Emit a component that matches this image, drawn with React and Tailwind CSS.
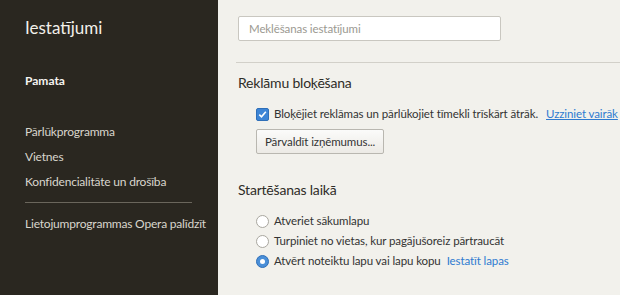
import React, { useState } from 'react'

const NAV = ['Pārlūkprogramma', 'Vietnes', 'Konfidencialitāte un drošība']

const STARTUP = [
  { key: 'home', label: 'Atveriet sākumlapu' },
  { key: 'continue', label: 'Turpiniet no vietas, kur pagājušoreiz pārtraucāt' },
  { key: 'pages', label: 'Atvērt noteiktu lapu vai lapu kopu', link: 'Iestatīt lapas' }
]

export default function App() {
  const [block, setBlock] = useState(true)
  const [startup, setStartup] = useState('pages')

  return (
    <div className="flex w-[620px] h-[295px] overflow-hidden text-[12px] text-[#333] whitespace-nowrap" style={{ fontFamily: 'Lato, "Noto Sans", sans-serif' }}>
      {/* ── Sidebar ── */}
      <div className="w-[218px] shrink-0 bg-[#2a2720] pl-[25px] pt-[17px]">
        <h1 className="text-[17px] text-[#f2f0ea] leading-[22px]">Iestatījumi</h1>
        <div className="mt-[34px] font-bold text-[#f5f4f0] leading-[16px]">Pamata</div>
        <div className="mt-[35px] space-y-[9px] text-[#d9d6cd] leading-[16px] tracking-[-0.2px]">
          {NAV.map(n => <div key={n}>{n}</div>)}
        </div>
        <div className="mt-[12px] w-[167px] border-t border-[#6a665c]" />
        <div className="mt-[13px] text-[#d9d6cd] leading-[16px] tracking-[-0.2px]">Lietojumprogrammas Opera palīdzīt</div>
      </div>

      {/* ── Main ── */}
      <div className="flex-1 bg-[#f2f1ec] pt-[16px] text-[11.5px] tracking-[-0.1px]">
        <div className="pl-[20px]">
          <input placeholder="Meklēšanas iestatījumi" className="w-[263px] h-[25px] bg-white border border-[#c9c7c0] rounded-[2px] px-[10px] text-[11.5px] placeholder:text-[#9b9991] outline-none" />
        </div>
        <div className="mt-[21px] ml-[18px] border-t border-[#d2d0c9]" />

        <div className="pl-[20px] pt-[10px]">
          <h2 className="text-[14px] text-[#2f2d28] leading-[20px] tracking-[-0.2px]">Reklāmu bloķēšana</h2>
          <div className="pl-[18px] mt-[13px]">
            <label className="flex items-center gap-[5px] leading-[16px]">
              <span onClick={() => setBlock(!block)} className={`w-[13px] h-[13px] shrink-0 rounded-[2px] flex items-center justify-center ${block ? 'bg-[#3d85d6] border border-[#2f6fb8]' : 'bg-white border border-[#9a988f]'}`}>
                {block && <svg width="9" height="9" viewBox="0 0 9 9"><path d="M1.3 4.6 L3.5 6.8 L7.8 1.8" fill="none" stroke="#fff" strokeWidth="1.6" /></svg>}
              </span>
              <span className="text-[#333]">Bloķējiet reklāmas un pārlūkojiet tīmekli trīskārt ātrāk.</span>
              <span className="ml-[3px] text-[#2f7bd0] underline">Uzziniet vairāk</span>
            </label>
            <button className="mt-[7px] h-[25px] px-[8px] bg-gradient-to-b from-[#fbfbfa] to-[#eceae5] border border-[#b9b7b0] rounded-[2px] text-[11.5px] text-[#333]">Pārvaldīt izņēmumus...</button>
          </div>
        </div>

        <div className="pl-[20px] pt-[26px]">
          <h2 className="text-[14px] text-[#2f2d28] leading-[20px] tracking-[-0.2px]">Startēšanas laikā</h2>
          <div className="pl-[18px] mt-[13px] space-y-[4px]">
            {STARTUP.map(o => (
              <div key={o.key} onClick={() => setStartup(o.key)} className="flex items-center gap-[5px] leading-[16px]">
                <span className={`w-[13px] h-[13px] shrink-0 rounded-full flex items-center justify-center ${startup === o.key ? 'bg-[#4a8fd8] border border-[#2f6fb8]' : 'bg-white border border-[#a9a79f]'}`}>
                  {startup === o.key && <span className="w-[5px] h-[5px] rounded-full bg-white" />}
                </span>
                <span>{o.label}</span>
                {o.link && <span className="ml-[1px] text-[#2f7bd0]">{o.link}</span>}
              </div>
            ))}
          </div>
        </div>
      </div>
    </div>
  )
}
